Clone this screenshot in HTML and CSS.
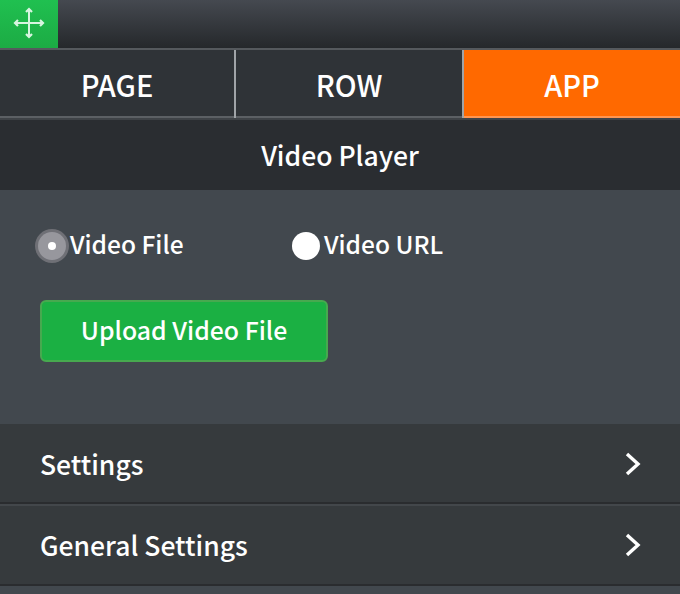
FILE: index.html
```html
<!DOCTYPE html>
<html lang="en">
<head>
<meta charset="utf-8">
<title>Video Player</title>
<link rel="stylesheet" href="styles.css">
</head>
<body>
<header class="topbar">
  <div class="move">
    <svg width="34" height="34" viewBox="0 0 34 34" fill="none" stroke="#d8f5e0" stroke-width="2">
      <path d="M17 3V31M3 17H31"/>
      <path d="M14 6L17 3L20 6M14 28L17 31L20 28M6 14L3 17L6 20M28 14L31 17L28 20" stroke-width="2.2"/>
    </svg>
  </div>
</header>
<nav class="tabs">
  <div class="tab tab-page">PAGE</div>
  <div class="tab tab-row">ROW</div>
  <div class="tab tab-app">APP</div>
</nav>
<h1 class="title">Video Player</h1>
<section class="panel">
  <div class="radios">
    <label class="radio radio-file"><span class="dot dot-on"><span class="pip"></span></span><span class="radio-text">Video File</span></label>
    <label class="radio"><span class="dot"></span><span class="radio-text">Video URL</span></label>
  </div>
  <button class="upload">Upload Video File</button>
</section>
<div class="row row-first"><span class="row-text">Settings</span>
  <svg class="chev" width="16" height="24" viewBox="0 0 16 24" fill="none" stroke="#fff" stroke-width="3.4"><path d="M2 2L13 12L2 22"/></svg>
</div>
<div class="row"><span class="row-text">General Settings</span>
  <svg class="chev" width="16" height="24" viewBox="0 0 16 24" fill="none" stroke="#fff" stroke-width="3.4"><path d="M2 2L13 12L2 22"/></svg>
</div>
</body>
</html>
```
FILE: styles.css
```css
* { box-sizing: border-box; }
html, body { margin: 0; padding: 0; }
body {
  width: 680px;
  height: 594px;
  overflow: hidden;
  background: #42484e;
  color: #fff;
  font-family: "Noto Sans CJK SC", "Noto Sans", sans-serif;
}
.topbar {
  height: 48px;
  background: linear-gradient(#454950, #25282b);
}
.move {
  width: 58px;
  height: 50px;
  background: linear-gradient(#20c050, #1cab44);
  border-bottom: 2px solid #4cc46e;
  display: flex;
  align-items: center;
  justify-content: center;
  padding-bottom: 2px;
}
.tabs {
  height: 72px;
  display: flex;
  background: #2f3337;
  border-top: 2px solid #55595d;
  border-bottom: 2px solid #3f4347;
}
.tab {
  font-size: 29px;
  font-weight: 500;
  line-height: 68px;
  height: 68px;
  text-align: center;
  box-shadow: inset 0 -2px 0 #5c6064;
}
.tab-page { width: 236px; border-right: 2px solid #a0a4a8; }
.tab-row { width: 228px; border-right: 2px solid #a0a4a8; }
.tab-app { flex: 1; background: #ff6900; box-shadow: inset 0 -2px 0 #ff9550; }
.title {
  margin: 0;
  height: 70px;
  line-height: 70px;
  background: #2a2d31;
  font-size: 26.5px;
  font-weight: 500;
  text-align: center;
}
.panel {
  height: 234px;
  padding: 38px 40px 0;
}
.radios { display: flex; height: 36px; align-items: center; margin-left: -6px; }
.radio { display: flex; align-items: center; font-size: 24.5px; font-weight: 500; }
.radio-file { width: 258px; }
.radio-text { padding-bottom: 6px; }
.dot {
  width: 28px;
  height: 28px;
  border-radius: 50%;
  background: #fff;
  flex: none;
  display: flex;
  align-items: center;
  justify-content: center;
  margin-right: 4px;
}
.dot-on {
  background: #97979d;
  box-shadow: 0 0 0 3px #6f7076;
  margin-left: 4px;
  margin-right: 4px;
}
.pip { width: 8px; height: 8px; border-radius: 50%; background: #fff; }
.upload {
  display: block;
  margin-top: 36px;
  padding-bottom: 5px;
  width: 288px;
  height: 62px;
  border: 2px solid #47a94f;
  border-radius: 6px;
  background: #1bb043;
  color: #fff;
  font: 500 24.8px "Noto Sans CJK SC", "Noto Sans", sans-serif;
}
.row {
  height: 82px;
  padding: 0 40px;
  background: #363a3d;
  border-top: 2px solid #43474b;
  border-bottom: 2px solid #2a2c2f;
  display: flex;
  align-items: center;
  justify-content: space-between;
  font-size: 26.5px;
  font-weight: 500;
}
.row-first { height: 80px; border-top-color: #363a3d; }
.row-text { padding-bottom: 2px; }
.chev { margin-right: -1px; }
```
